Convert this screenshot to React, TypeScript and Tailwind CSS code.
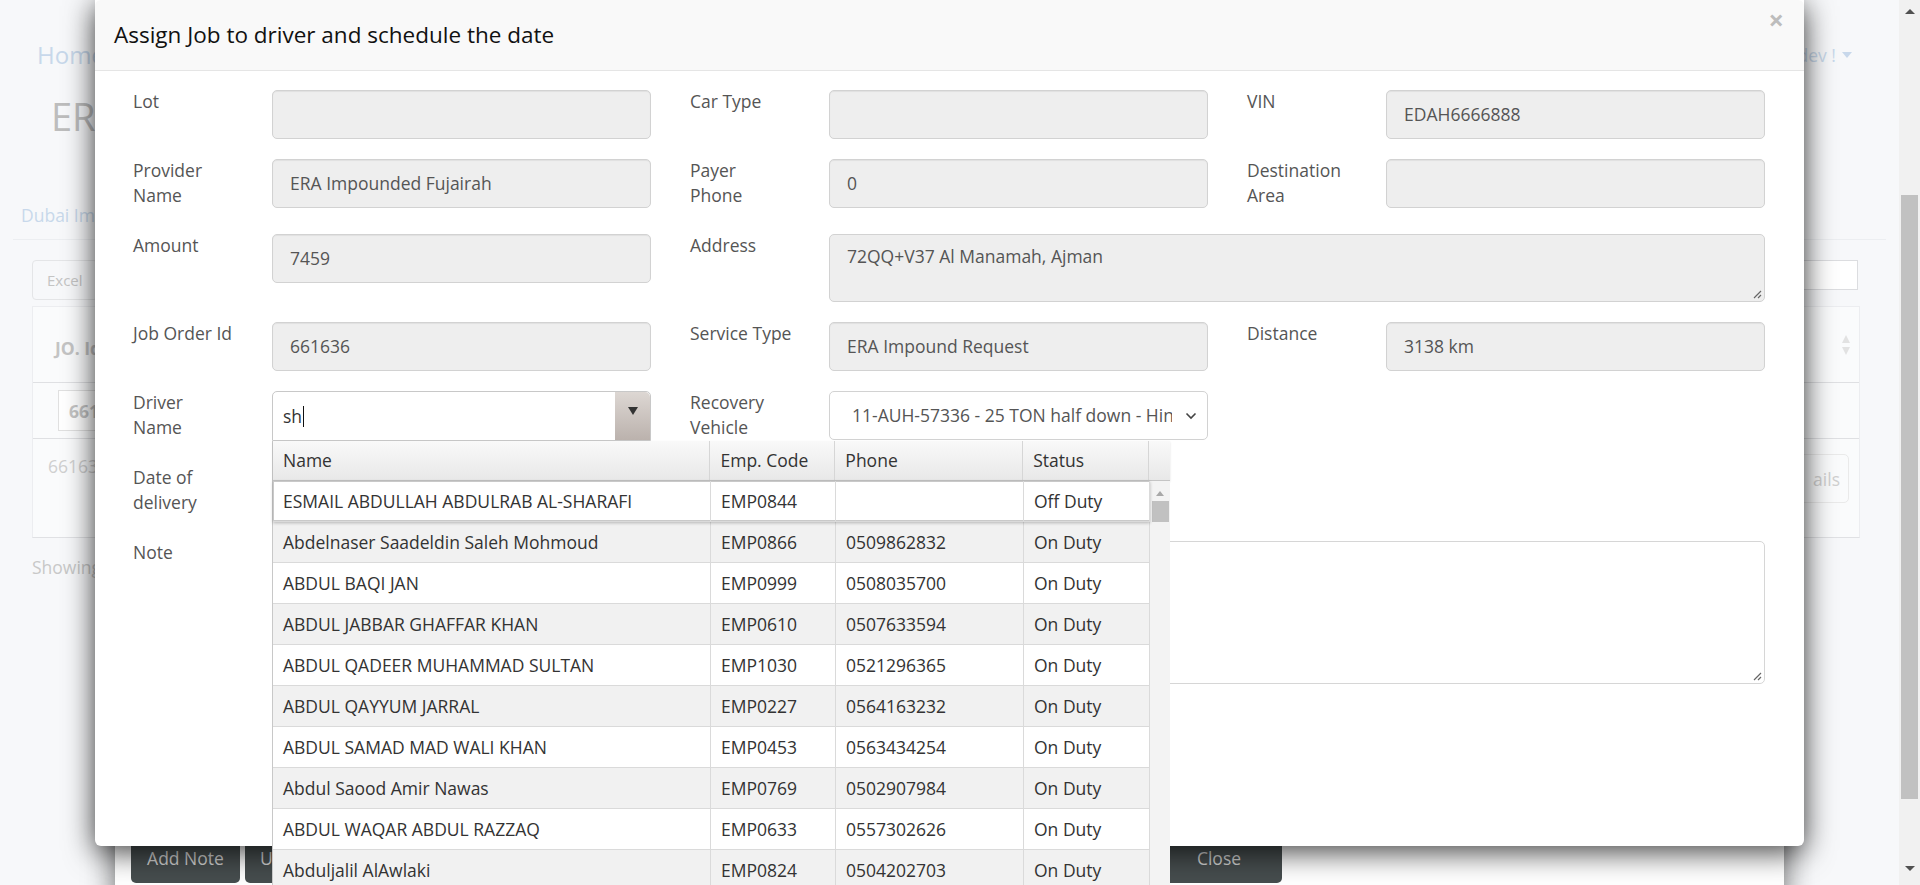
import React from "react";

type Field = { lines: string[]; value?: string };

const labelCls = "relative -top-[1px] w-[139px] shrink-0 text-[17.5px] leading-[25px] text-[#555] mb-[5px]";
const roInput =
  "w-[379px] h-[49px] rounded-[5px] border border-[#d2d2d2] bg-[#eeeeee] px-[17px] flex items-center text-[17.5px] text-[#555] shadow-[inset_0_1px_1px_rgba(0,0,0,0.06)]";

function Label({ lines }: { lines: string[] }) {
  return (
    <div className={labelCls}>
      {lines.map((l) => (
        <div key={l}>{l}</div>
      ))}
    </div>
  );
}

function RoField({ f }: { f: Field }) {
  return (
    <div className="flex items-start mb-[20px]">
      <Label lines={f.lines} />
      <div className={roInput}>{f.value}</div>
    </div>
  );
}

function Resize() {
  return (
    <svg className="absolute right-[2px] bottom-[2px]" width="10" height="10" viewBox="0 0 10 10">
      <path d="M9 2 L2 9 M9 6 L6 9" stroke="#666" strokeWidth="1.2" />
    </svg>
  );
}

const drivers = [
  ["ESMAIL ABDULLAH ABDULRAB AL-SHARAFI", "EMP0844", "", "Off Duty"],
  ["Abdelnaser Saadeldin Saleh Mohmoud", "EMP0866", "0509862832", "On Duty"],
  ["ABDUL BAQI JAN", "EMP0999", "0508035700", "On Duty"],
  ["ABDUL JABBAR GHAFFAR KHAN", "EMP0610", "0507633594", "On Duty"],
  ["ABDUL QADEER MUHAMMAD SULTAN", "EMP1030", "0521296365", "On Duty"],
  ["ABDUL QAYYUM JARRAL", "EMP0227", "0564163232", "On Duty"],
  ["ABDUL SAMAD MAD WALI KHAN", "EMP0453", "0563434254", "On Duty"],
  ["Abdul Saood Amir Nawas", "EMP0769", "0502907984", "On Duty"],
  ["ABDUL WAQAR ABDUL RAZZAQ", "EMP0633", "0557302626", "On Duty"],
  ["Abduljalil AlAwlaki", "EMP0824", "0504202703", "On Duty"],
];

const colW = ["w-[438px]", "w-[125px]", "w-[188px]", "w-[126px]"];

function Dropdown() {
  return (
    <div className="absolute left-0 top-[50px] z-30 w-[898px] border-l border-[#c8c8c8] bg-white text-[17.5px] text-[#333]">
      <div className="flex h-[40px] bg-gradient-to-b from-[#f9f9f9] to-[#e8e8e8] border-b border-[#c4c4c4] shadow-[0_1px_2px_rgba(0,0,0,0.12)]">
        {["Name", "Emp. Code", "Phone", "Status"].map((h, i) => (
          <div key={h} className={`${colW[i]} flex items-center px-[10px] border-r border-[#d6d6d6]`}>
            {h}
          </div>
        ))}
        <div className="w-[21px]" />
      </div>
      <div className="flex">
        <div className="w-[877px]">
          {drivers.map((d, r) => (
            <div
              key={d[0]}
              className={`flex h-[41px] border-b border-[#dadada] ${
                r === 0
                  ? "bg-white shadow-[inset_0_0_0_1px_#c9c9c9,0_1px_3px_rgba(0,0,0,0.25)] relative"
                  : r % 2 === 1
                  ? "bg-[#f1f1f1]"
                  : "bg-white"
              }`}
            >
              {d.map((c, i) => (
                <div key={i} className={`${colW[i]} flex items-center px-[10px] border-r border-[#dadada] whitespace-nowrap`}>
                  {c}
                </div>
              ))}
            </div>
          ))}
        </div>
        <div className="w-[21px] bg-[#f3f3f3] flex flex-col items-center">
          <div className="mt-[10px] w-0 h-0 border-l-[4px] border-r-[4px] border-b-[5px] border-l-transparent border-r-transparent border-b-[#a8a8a8]" />
          <div className="mt-[5px] h-[21px] w-[17px] bg-[#c1c1c1]" />
        </div>
      </div>
    </div>
  );
}

function MainModal() {
  return (
    <div className="absolute left-[95px] top-0 z-20 w-[1709px] h-[846px] bg-white rounded-b-[6px] shadow-[0_6px_30px_rgba(0,0,0,0.75)]">
      <div className="h-[71px] bg-[#f9f9f9] border-b border-[#e5e5e5] rounded-t-[6px] flex justify-between pl-[19px] pr-[20px]">
        <div className="self-center text-[22.5px] leading-[32px] text-[#111] pb-[1px]">
          Assign Job to driver and schedule the date
        </div>
        <div className="text-[27px] leading-[27px] font-bold text-[#bdbdbd] pt-[6px]">×</div>
      </div>
      <div className="pt-[19px] px-[38px]">
        <div className="grid grid-cols-[518px_518px_518px] gap-x-[39px]">
          <RoField f={{ lines: ["Lot"], value: "" }} />
          <RoField f={{ lines: ["Car Type"], value: "" }} />
          <RoField f={{ lines: ["VIN"], value: "EDAH6666888" }} />

          <RoField f={{ lines: ["Provider", "Name"], value: "ERA Impounded Fujairah" }} />
          <RoField f={{ lines: ["Payer", "Phone"], value: "0" }} />
          <RoField f={{ lines: ["Destination", "Area"], value: "" }} />

          <RoField f={{ lines: ["Amount"], value: "7459" }} />
          <div className="col-span-2 flex items-start mb-[20px]">
            <Label lines={["Address"]} />
            <div className="relative flex-1 h-[68px] rounded-[5px] border border-[#d2d2d2] bg-[#eeeeee] px-[17px] pt-[9px] text-[17.5px] leading-[25px] text-[#555]">
              72QQ+V37 Al Manamah, Ajman
              <Resize />
            </div>
          </div>

          <RoField f={{ lines: ["Job Order Id"], value: "661636" }} />
          <RoField f={{ lines: ["Service Type"], value: "ERA Impound Request" }} />
          <RoField f={{ lines: ["Distance"], value: "3138 km" }} />

          <div className="flex items-start mb-[20px]">
            <Label lines={["Driver", "Name"]} />
            <div className="relative w-[379px] h-[50px]">
              <div className="flex h-[50px] rounded-tl-[5px] rounded-tr-[5px] border border-[#c8c8c8] bg-white">
                <div className="flex-1 flex items-center pl-[10px] text-[17.5px] text-[#333]">
                  sh<span className="ml-[1px] inline-block w-[1px] h-[21px] bg-[#111]" />
                </div>
                <div className="w-[35px] rounded-tr-[5px] bg-gradient-to-b from-[#ddd7d3] to-[#bbb2ad] flex justify-center pt-[15px]">
                  <div className="w-0 h-0 border-l-[5px] border-r-[5px] border-t-[8px] border-l-transparent border-r-transparent border-t-[#333]" />
                </div>
              </div>
              <Dropdown />
            </div>
          </div>
          <div className="flex items-start mb-[20px]">
            <Label lines={["Recovery", "Vehicle"]} />
            <div className="w-[379px] h-[49px] rounded-[5px] border border-[#d2d2d2] bg-white flex items-center pl-[22px] pr-[10px] text-[17.5px] text-[#555]">
              <div className="w-[320px] overflow-hidden whitespace-nowrap">11-AUH-57336 - 25 TON half down - Hin</div>
              <svg className="ml-auto" width="12" height="8" viewBox="0 0 12 8">
                <path d="M1.5 1.5 L6 6 L10.5 1.5" fill="none" stroke="#444" strokeWidth="1.6" />
              </svg>
            </div>
          </div>
          <div />

          <div className="flex items-start mb-[20px]">
            <Label lines={["Date of", "delivery"]} />
            <div className="w-[379px] h-[49px] rounded-[5px] border border-[#d2d2d2] bg-white" />
          </div>
          <div />
          <div />

          <div className="col-span-3 flex items-start mb-[20px]">
            <Label lines={["Note"]} />
            <div className="relative flex-1 h-[143px] rounded-[5px] border border-[#d6d6d6] bg-white">
              <Resize />
            </div>
          </div>
        </div>
      </div>
    </div>
  );
}

function BackModal() {
  return (
    <div className="absolute left-[115px] top-0 z-10 w-[1669px] h-[902px] bg-white rounded-[6px] shadow-[0_6px_30px_rgba(0,0,0,0.6)] flex flex-col justify-end pb-[19px]">
      <div className="flex items-end pl-[16px] text-[17.5px] text-[#d2d2d2]">
        <div className="w-[109px] h-[60px] rounded-[5px] bg-[#464d4e] flex items-end justify-center pb-[12px]">Add Note</div>
        <div className="ml-[5px] w-[170px] h-[60px] rounded-[5px] bg-[#464d4e] flex items-end pl-[15px] pb-[12px]">Update</div>
        <div className="ml-[741px] w-[126px] h-[60px] rounded-[5px] bg-[#464d4e] flex items-end justify-center pb-[12px]">Close</div>
      </div>
    </div>
  );
}

function SortIcon() {
  return (
    <svg width="10" height="22" viewBox="0 0 10 22">
      <path d="M5 1 L9 9 L1 9 Z" fill="#e2e2e2" />
      <path d="M5 21 L9 13 L1 13 Z" fill="#e2e2e2" />
    </svg>
  );
}

function Background() {
  return (
    <div className="w-[1899px] h-[885px] text-[17.5px] text-[#c8c8c8]">
      <div className="flex justify-between items-center h-[34px] mt-[38px] pl-[37px] pr-[47px]">
        <div className="text-[24px] text-[#c8d8eb]">Home</div>
        <div className="flex items-center text-[17.5px] text-[#c8d8eb]">
          Welcome dev !
          <span className="ml-[6px] w-0 h-0 border-l-[5px] border-r-[5px] border-t-[6px] border-l-transparent border-r-transparent border-t-[#c8d8eb]" />
        </div>
      </div>
      <div className="mt-[21px] pl-[51px] text-[38px] leading-[46px] text-[#bdbdbd]">ERA Impound</div>
      <div className="mt-[63px] mx-[13px] border-b border-[#eceef1] pl-[8px] pb-[11px] text-[#c8d8eb]">Dubai Impound</div>
      <div className="mt-[20px] flex justify-between pl-[32px] pr-[41px]">
        <div className="h-[40px] px-[14px] flex items-center border border-[#e4e5e7] rounded-[4px] text-[15px] text-[#c4c4c4]">Excel</div>
        <div className="w-[95px] h-[30px] border border-[#dcdde0] bg-white" />
      </div>
      <div className="mt-[6px] ml-[32px] w-[1828px] border border-[#ecedf0] border-b-[#e0e1e4] bg-[#fafbfc]">
        <div className="h-[76px] flex items-center justify-between pl-[22px] pr-[8px] border-b border-[#dfe0e3] font-bold text-[#c4c4c4]">
          <span className="pt-[6px]">JO. Id</span>
          <SortIcon />
        </div>
        <div className="h-[56px] flex items-center pl-[25px] border-b border-[#dfe0e3]">
          <div className="w-[120px] h-[41px] border border-[#e0e0e0] bg-white font-bold flex items-center pl-[10px] text-[#c4c4c4]">661636</div>
        </div>
        <div className="h-[98px] flex justify-between pl-[15px] pr-[10px] pt-[14px] text-[#d0d0d0]">
          <span>661636</span>
          <div className="mt-[1px] w-[62px] h-[49px] border border-[#eaeaea] rounded-[5px] flex items-center justify-end pr-[8px]">ails</div>
        </div>
      </div>
      <div className="mt-[16px] pl-[32px] text-[#c8c8c8]">Showing 1 to 1 of 1 entries</div>
    </div>
  );
}

function PageScrollbar() {
  return (
    <div className="absolute right-0 top-0 z-40 w-[21px] h-[885px] bg-[#f1f1f1] flex flex-col items-center">
      <div className="mt-[9px] w-0 h-0 border-l-[5px] border-r-[5px] border-b-[5px] border-l-transparent border-r-transparent border-b-[#505050]" />
      <div className="mt-[181px] w-[17px] h-[604px] bg-[#c1c1c1]" />
      <div className="mt-[67px] w-0 h-0 border-l-[5px] border-r-[5px] border-t-[5px] border-l-transparent border-r-transparent border-t-[#505050]" />
    </div>
  );
}

export default function App() {
  return (
    <div className="relative w-[1920px] h-[885px] overflow-hidden bg-[#f7f8fa] font-['Open_Sans',sans-serif]">
      <Background />
      <BackModal />
      <MainModal />
      <PageScrollbar />
    </div>
  );
}
